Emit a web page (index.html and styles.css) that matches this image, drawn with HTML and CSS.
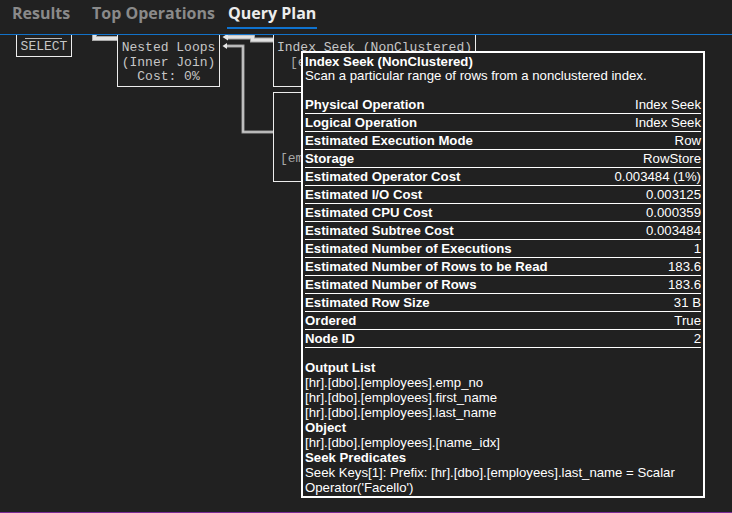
FILE: index.html
```html
<!DOCTYPE html>
<html>
<head>
<meta charset="utf-8">
<link rel="stylesheet" href="styles.css">
</head>
<body>
<div class="app">
  <div class="tabs">
    <div class="tab tab-results"><span class="tab-label">Results</span></div>
    <div class="tab tab-ops"><span class="tab-label">Top Operations</span></div>
    <div class="tab"><span class="tab-label active">Query Plan</span></div>
  </div>
  <div class="canvas">
    <svg class="links" width="732" height="477" viewBox="0 0 732 477">
      <path d="M94.5 -6 V3.5 H117" class="thick-out"/>
      <path d="M94.5 -6 V3.5 H117" class="thick-in"/>
      <path d="M273 5 H252.5 V2 H227" class="thick-out"/>
      <path d="M273 5 H252.5 V2 H227" class="thick-in"/>
      <polygon points="222.5,2 228,-1.5 228,5.5" class="head"/>
      <path d="M226 11 H243 V97 H273" class="thin-out"/>
      <path d="M226 11 H243 V97 H273" class="thin-in"/>
      <polygon points="222.5,11 227,8 227,14" class="head"/>
    </svg>

    <div class="node node-select">
      <div class="select-bar"></div>
      <div class="node-line">SELECT</div>
    </div>

    <div class="node node-loops">
      <div class="node-line">Nested Loops</div>
      <div class="node-line">(Inner Join)</div>
      <div class="node-line">Cost: 0%</div>
    </div>

    <div class="node node-seek">
      <div class="node-line">Index Seek (NonClustered)</div>
      <div class="node-clip node-clip-seek">[e</div>
    </div>

    <div class="node node-lookup">
      <div class="node-clip node-clip-lookup">[em</div>
    </div>

    <div class="tooltip">
      <div class="tt-title">Index Seek (NonClustered)</div>
      <div class="tt-desc">Scan a particular range of rows from a nonclustered index.</div>
      <div class="tt-table">
        <div class="tt-row"><span class="tt-key">Physical Operation</span><span>Index Seek</span></div>
        <div class="tt-row"><span class="tt-key">Logical Operation</span><span>Index Seek</span></div>
        <div class="tt-row"><span class="tt-key">Estimated Execution Mode</span><span>Row</span></div>
        <div class="tt-row"><span class="tt-key">Storage</span><span>RowStore</span></div>
        <div class="tt-row"><span class="tt-key">Estimated Operator Cost</span><span>0.003484 (1%)</span></div>
        <div class="tt-row"><span class="tt-key">Estimated I/O Cost</span><span>0.003125</span></div>
        <div class="tt-row"><span class="tt-key">Estimated CPU Cost</span><span>0.000359</span></div>
        <div class="tt-row"><span class="tt-key">Estimated Subtree Cost</span><span>0.003484</span></div>
        <div class="tt-row"><span class="tt-key">Estimated Number of Executions</span><span>1</span></div>
        <div class="tt-row"><span class="tt-key">Estimated Number of Rows to be Read</span><span>183.6</span></div>
        <div class="tt-row"><span class="tt-key">Estimated Number of Rows</span><span>183.6</span></div>
        <div class="tt-row"><span class="tt-key">Estimated Row Size</span><span>31 B</span></div>
        <div class="tt-row"><span class="tt-key">Ordered</span><span>True</span></div>
        <div class="tt-row"><span class="tt-key">Node ID</span><span>2</span></div>
      </div>
      <div class="tt-section">
        <div class="tt-head">Output List</div>
        <div>[hr].[dbo].[employees].emp_no</div>
        <div>[hr].[dbo].[employees].first_name</div>
        <div>[hr].[dbo].[employees].last_name</div>
        <div class="tt-head">Object</div>
        <div>[hr].[dbo].[employees].[name_idx]</div>
        <div class="tt-head">Seek Predicates</div>
        <div>Seek Keys[1]: Prefix: [hr].[dbo].[employees].last_name = Scalar Operator('Facello')</div>
      </div>
    </div>
  </div>
</div>
</body>
</html>
```
FILE: styles.css
```css
* { box-sizing: border-box; }
html, body {
  margin: 0;
  padding: 0;
  background: #212121;
}
.app {
  width: 732px;
  height: 513px;
  background: #212121;
  border-bottom: 1px solid #7a2b96;
  overflow: hidden;
  display: flex;
  flex-direction: column;
}
.tabs {
  height: 35px;
  flex: none;
  display: flex;
  padding-left: 12px;
  border-bottom: 1px solid #1272c9;
  font-family: "Open Sans", "DejaVu Sans", sans-serif;
  font-weight: 700;
  font-size: 16px;
}
.tab {
  padding-top: 3px;
}
.tab-results { width: 80px; }
.tab-ops { width: 136px; }
.tab-label {
  display: block;
  line-height: 21px;
  padding-bottom: 3px;
  color: #8a8a8a;
  border-bottom: 2px solid transparent;
  white-space: nowrap;
}
.tab-label.active {
  color: #ececec;
  border-bottom-color: #0f73d0;
  margin-left: -1px;
  padding: 0 1px 3px;
}
.canvas {
  position: relative;
  flex: 1;
  overflow: hidden;
}
.links {
  position: absolute;
  left: 0;
  top: 0;
  overflow: visible;
}
.thick-out { fill: none; stroke: #a9a9a9; stroke-width: 5; }
.thick-in { fill: none; stroke: #e2e2e2; stroke-width: 3; }
.thin-out { fill: none; stroke: #9c9c9c; stroke-width: 3; }
.thin-in { fill: none; stroke: #d6d6d6; stroke-width: 1.2; }
.head { fill: #e8e8e8; }

.node {
  position: absolute;
  border: 1px solid #ededed;
  font-family: "Liberation Mono", "Courier New", monospace;
  font-size: 13px;
  color: #c6c6c6;
  text-align: center;
  white-space: nowrap;
  overflow: hidden;
}
.node-line {
  line-height: 14.5px;
}
.node-clip {
  text-align: left;
  line-height: 14.5px;
  color: #a8a8a8;
}
.node-clip-seek {
  padding-left: 16px;
}
.node-clip-lookup {
  padding-left: 6px;
}
.node-select {
  left: 16px;
  top: -20px;
  width: 56px;
  height: 42px;
  padding-top: 24px;
}
.select-bar {
  position: absolute;
  left: 8px;
  top: 22px;
  width: 37px;
  height: 1px;
  background: #b8b8b8;
}
.node-select .node-line {
  line-height: 14px;
}
.node-loops {
  left: 117px;
  top: -20px;
  width: 103px;
  height: 72px;
  padding-top: 25px;
}
.node-seek {
  left: 273px;
  top: -20px;
  width: 203px;
  height: 72px;
  padding-top: 25px;
}
.node-lookup {
  left: 273px;
  top: 57px;
  width: 203px;
  height: 90px;
  padding-top: 59px;
}

.tooltip {
  position: absolute;
  left: 301px;
  top: 16px;
  width: 404px;
  height: 447px;
  border: 2px solid #ffffff;
  background: #212121;
  padding: 2px 2px 0 2px;
  font-family: "Liberation Sans", Arial, sans-serif;
  font-size: 13.2px;
  color: #ffffff;
}
.tt-title {
  font-weight: 700;
  line-height: 14px;
}
.tt-desc {
  line-height: 14px;
}
.tt-table {
  margin-top: 13px;
  display: flex;
  flex-direction: column;
}
.tt-row {
  height: 18px;
  display: flex;
  justify-content: space-between;
  align-items: center;
  border-bottom: 1px solid #ffffff;
  line-height: 15px;
  padding-bottom: 1px;
}
.tt-key {
  font-weight: 700;
}
.tt-section {
  margin-top: 12px;
  line-height: 15px;
}
.tt-head {
  font-weight: 700;
}
```
